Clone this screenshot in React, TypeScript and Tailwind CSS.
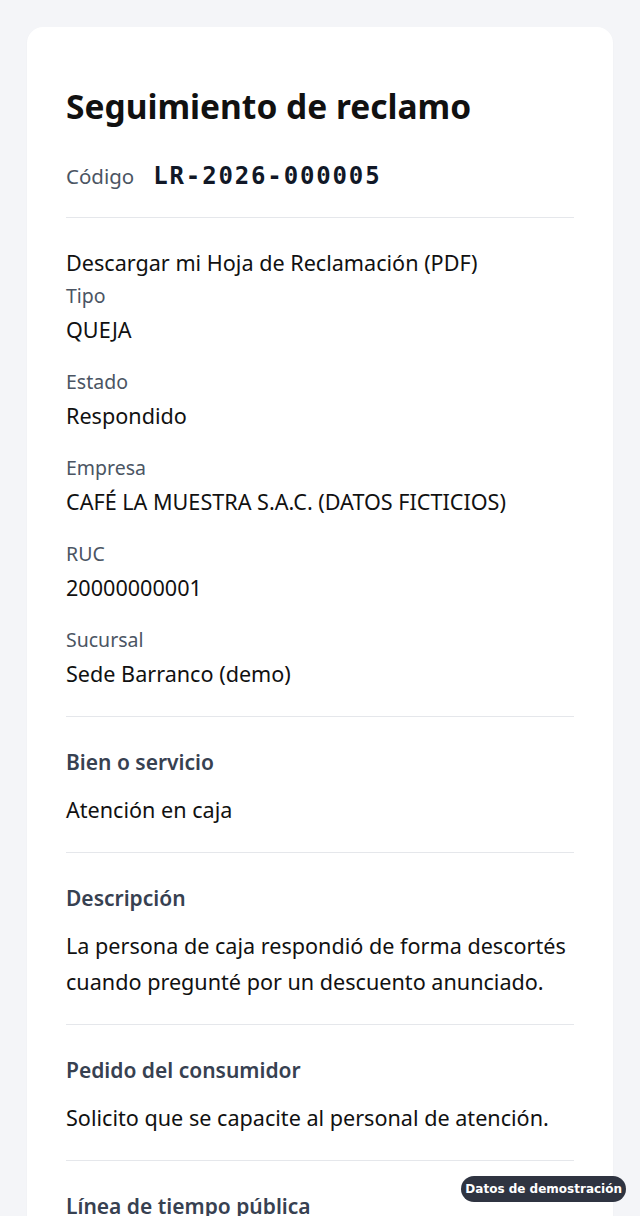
export default function App() {
  const sans = { fontFamily: '"Noto Sans", "Open Sans", sans-serif' };
  return (
    <div className="min-h-[1216px] bg-[#f4f5f8] px-[27px] pt-[27px]" style={sans}>
      <div className="rounded-[16px] bg-white px-[39px] pt-[59px] pb-10 shadow-[0_1px_2px_rgba(0,0,0,0.04)]">
        <h1 className="text-[33.5px] font-bold leading-[40px] text-[#111111]">Seguimiento de reclamo</h1>

        <div className="mt-[32px] flex items-center gap-[19px] pb-[23px]">
          <span className="text-[20.5px] text-[#4b5563]">Código</span>
          <span
            className="text-[24px] font-bold tracking-[1.85px] text-[#111827]"
            style={{ fontFamily: '"DejaVu Sans Mono", monospace' }}
          >
            LR-2026-000005
          </span>
        </div>

        <div className="border-t border-[#e5e7eb] pt-[28px] pb-[24px] text-[21.6px] text-[#111111]">
          <div className="leading-[34px]">Descargar mi Hoja de Reclamación (PDF)</div>
          <div className="flex flex-col gap-[18px]">
            {[
              ["Tipo", "QUEJA"],
              ["Estado", "Respondido"],
              ["Empresa", "CAFÉ LA MUESTRA S.A.C. (DATOS FICTICIOS)"],
              ["RUC", "20000000001"],
              ["Sucursal", "Sede Barranco (demo)"],
            ].map(([k, v]) => (
              <div key={k}>
                <div className="text-[19.5px] leading-[32px] text-[#4b5563]">{k}</div>
                <div className="leading-[36px]">{v}</div>
              </div>
            ))}
          </div>
        </div>

        {[
          ["Bien o servicio", ["Atención en caja"]],
          ["Descripción", ["La persona de caja respondió de forma descortés", "cuando pregunté por un descuento anunciado."]],
          ["Pedido del consumidor", ["Solicito que se capacite al personal de atención."]],
        ].map(([h, lines]) => (
          <div key={h as string} className="border-t border-[#e5e7eb] pt-[29px] pb-[24px]">
            <div className="text-[21px] font-semibold leading-[32px] text-[#374151]">{h as string}</div>
            <div className="mt-[14px] text-[21.6px] leading-[36px] text-[#111111]">
              {(lines as string[]).map((l) => (
                <div key={l}>{l}</div>
              ))}
            </div>
          </div>
        ))}

        <div className="border-t border-[#e5e7eb] pt-[29px]">
          <div className="text-[21px] font-semibold leading-[32px] text-[#374151]">Línea de tiempo pública</div>
        </div>
      </div>

      <div
        className="fixed bottom-[14px] right-[14px] rounded-full bg-[#2f3441] px-[4px] py-[5px] text-[12px] font-bold leading-[16px] text-white"
        style={{ fontFamily: '"DejaVu Sans", sans-serif' }}
      >
        Datos de demostración
      </div>
    </div>
  );
}
